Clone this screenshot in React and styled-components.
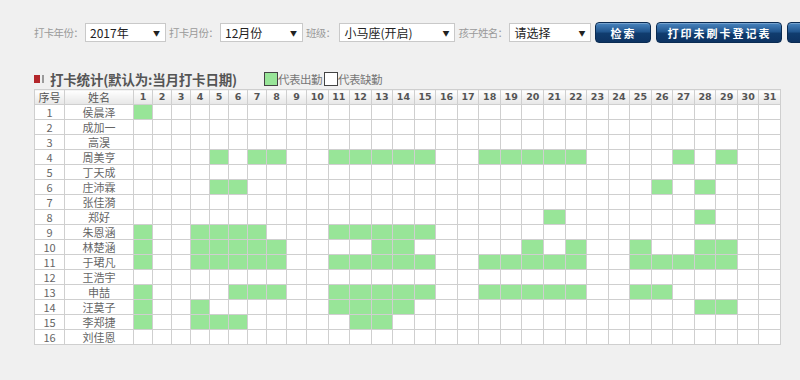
import React from 'react';
import styled, { createGlobalStyle } from 'styled-components';

const GlobalStyle = createGlobalStyle`
  html, body {
    margin: 0;
    padding: 0;
    background: #f0f0f0;
    overflow: hidden;
  }
  body {
    font-family: "Noto Sans CJK SC", "Noto Sans", sans-serif;
  }
`;

const Page = styled.div`
  padding: 22px 0 0 34px;
  width: 800px;
  box-sizing: border-box;
`;

const Toolbar = styled.div`
  display: flex;
  align-items: center;
  height: 21px;
  white-space: nowrap;
`;

const Label = styled.span`
  font-size: 10.5px;
  letter-spacing: -0.7px;
  color: #9a9a9a;
  margin-right: ${p => p.$mr || 2}px;
`;

const FakeSelect = styled.div`
  display: flex;
  align-items: center;
  justify-content: space-between;
  box-sizing: border-box;
  width: ${p => p.$w}px;
  height: 19px;
  margin-right: 3px;
  padding: 0 5px 0 4px;
  background: #fff;
  border: 1px solid #c9c9c9;
  font-size: 12px;
  color: #222;
  flex-shrink: 0;
`;

const Arrow = styled.span`
  font-size: 7px;
  color: #222;
`;

const Button = styled.button`
  flex-shrink: 0;
  width: ${p => p.$w}px;
  height: 21px;
  margin-left: ${p => p.$ml || 0}px;
  border: 1px solid #0a2b52;
  border-radius: 4px;
  background: linear-gradient(#4a86c0 0%, #22578f 45%, #103c6e 55%, #0d3362 100%);
  color: #fff;
  font-family: "Noto Sans CJK SC", sans-serif;
  font-size: 11px;
  font-weight: bold;
  letter-spacing: 2px;
  padding: 0;
  box-shadow: inset 0 1px 0 rgba(255, 255, 255, 0.25);
`;

const TitleRow = styled.div`
  display: flex;
  align-items: center;
  margin-top: 25px;
  height: 21px;
`;

const Marker = styled.span`
  display: inline-block;
  width: 6px;
  height: 8px;
  background: #b3262b;
  margin: 0 2px 0 0;
`;

const MarkerBar = styled.span`
  display: inline-block;
  width: 2px;
  height: 8px;
  background: #9a9a9a;
  margin-right: 6px;
`;

const Title = styled.h2`
  margin: 0;
  font-size: 13.5px;
  font-weight: bold;
  color: #555;
  letter-spacing: -0.2px;
  width: 214px;
`;

const LegendBox = styled.span`
  display: inline-block;
  width: 12px;
  height: 12px;
  border: 1px solid #444;
  background: ${p => (p.$on ? '#98e598' : '#fff')};
  margin-left: ${p => p.$ml || 0}px;
`;

const LegendText = styled.span`
  font-size: 11.5px;
  color: #777;
  letter-spacing: -0.5px;
`;

const Table = styled.table`
  border-collapse: collapse;
  table-layout: fixed;
  width: 747px;
  background: #fff;
  border: 1px solid #bdbdbd;
`;

const HeadCell = styled.th`
  height: 14px;
  padding: 0;
  border: 1px solid #cfcfcf;
  background: linear-gradient(#ffffff, #e6e6e6);
  font-family: ${p => (p.$num ? '"DejaVu Sans", sans-serif' : '"Noto Sans CJK SC", sans-serif')};
  font-size: ${p => (p.$num ? '9.5px' : '11px')};
  font-weight: ${p => (p.$num ? 'bold' : 'normal')};
  color: #555;
  line-height: 14px;
  text-align: center;
`;

const Row = styled.tr`
  height: 15px;
`;

const Cell = styled.td`
  padding: 0;
  border: 1px solid #cfcfcf;
  font-size: 11px;
  line-height: 14px;
  color: #666;
  text-align: center;
  background: ${p => (p.$on ? '#98e598' : '#fff')};
`;

const dayWidths = [19, 19, 19, 19, 19, 19, 19, 20, 20].concat(Array(22).fill(21.55));

const students = [
  { name: '侯晨泽', days: [1] },
  { name: '成加一', days: [] },
  { name: '高淏', days: [] },
  { name: '周美亨', days: [5, 7, 8, 11, 12, 13, 14, 15, 18, 19, 20, 21, 22, 27, 29] },
  { name: '丁天成', days: [] },
  { name: '庄沛霖', days: [5, 6, 26, 28] },
  { name: '张佳漪', days: [] },
  { name: '郑好', days: [21, 28] },
  { name: '朱恩涵', days: [1, 4, 5, 6, 7, 11, 12, 13, 14, 15] },
  { name: '林楚涵', days: [1, 4, 5, 6, 7, 8, 13, 14, 20, 22, 25, 28, 29] },
  { name: '于珺凡', days: [1, 4, 5, 6, 7, 8, 11, 12, 13, 14, 15, 18, 19, 20, 21, 22, 25, 26, 27, 28, 29] },
  { name: '王浩宇', days: [] },
  { name: '申喆', days: [1, 6, 7, 8, 11, 12, 13, 14, 15, 18, 19, 20, 21, 22, 25, 26] },
  { name: '汪莫子', days: [1, 4, 11, 12, 13, 14, 28, 29] },
  { name: '李郑捷', days: [1, 4, 5, 6, 12, 13] },
  { name: '刘佳恩', days: [] },
];

const days = Array.from({ length: 31 }, (_, i) => i + 1);

const App = () => {
  return (
    <Page>
      <GlobalStyle />
      <Toolbar>
        <Label>打卡年份：</Label>
        <FakeSelect $w={81}>2017年<Arrow>▼</Arrow></FakeSelect>
        <Label>打卡月份：</Label>
        <FakeSelect $w={83}>12月份<Arrow>▼</Arrow></FakeSelect>
        <Label $mr={4}>班级：</Label>
        <FakeSelect $w={116}>小马座(开启)<Arrow>▼</Arrow></FakeSelect>
        <Label>孩子姓名：</Label>
        <FakeSelect $w={82}>请选择<Arrow>▼</Arrow></FakeSelect>
        <Button $w={56} $ml={1}>检索</Button>
        <Button $w={126} $ml={5}>打印未刷卡登记表</Button>
        <Button $w={60} $ml={5} aria-label="more" />
      </Toolbar>

      <TitleRow>
        <Marker />
        <MarkerBar />
        <Title>打卡统计(默认为:当月打卡日期)</Title>
        <LegendBox $on />
        <LegendText>代表出勤</LegendText>
        <LegendBox $ml={2} />
        <LegendText>代表缺勤</LegendText>
      </TitleRow>

      <Table>
        <colgroup>
          <col style={{ width: 30 }} />
          <col style={{ width: 69 }} />
          {dayWidths.map((w, i) => (
            <col key={i} style={{ width: w }} />
          ))}
        </colgroup>
        <thead>
          <tr>
            <HeadCell>序号</HeadCell>
            <HeadCell>姓名</HeadCell>
            {days.map(d => (
              <HeadCell key={d} $num>{d}</HeadCell>
            ))}
          </tr>
        </thead>
        <tbody>
          {students.map((s, index) => (
            <Row key={index}>
              <Cell>{index + 1}</Cell>
              <Cell>{s.name}</Cell>
              {days.map(d => (
                <Cell key={d} $on={s.days.includes(d)} />
              ))}
            </Row>
          ))}
        </tbody>
      </Table>
    </Page>
  );
};

export default App;
